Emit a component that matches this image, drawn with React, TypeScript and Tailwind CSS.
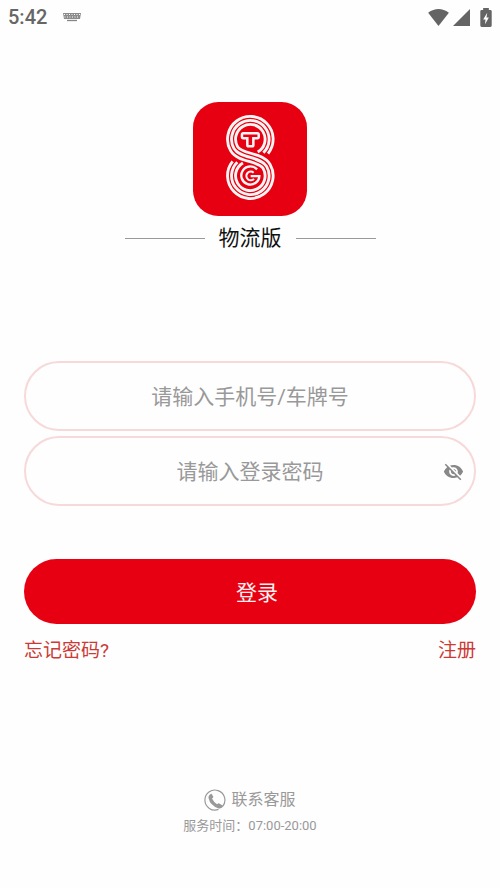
import { useState } from "react";
import { MdVisibility, MdVisibilityOff } from "react-icons/md";

// Radii of the ribbon's strands on the upper loop; each strand swaps sides on the lower loop.
const strands = [
  { top: 68, angle: 39 },
  { top: 56, angle: 46 },
  { top: 44, angle: 60 },
];

const centerX = 171;
const upperY = 111;
const lowerY = 220;
const radiusSum = 112;
const joinCos = Math.cos(Math.PI / 6);
const joinSin = 0.5;

function strandPath(top: number, angle: number, endAngle: number) {
  const bottom = radiusSum - top;
  const a = (angle * Math.PI) / 180;
  const b = (endAngle * Math.PI) / 180;
  const start = `${centerX + top * Math.cos(a)} ${upperY + top * Math.sin(a)}`;
  const leaveX = centerX - top * joinCos;
  const leaveY = upperY + top * joinSin;
  const enterX = centerX + bottom * joinCos;
  const enterY = lowerY - bottom * joinSin;
  const leavePull = top * 0.62;
  const enterPull = bottom * 0.62;
  const bend = `${leaveX + leavePull * joinSin} ${leaveY + leavePull * joinCos} ${enterX - enterPull * joinSin} ${enterY - enterPull * joinCos}`;
  const end = `${centerX - bottom * Math.cos(b)} ${lowerY - bottom * Math.sin(b)}`;
  return `M${start}A${top} ${top} 0 1 0 ${leaveX} ${leaveY}C${bend} ${enterX} ${enterY}A${bottom} ${bottom} 0 1 1 ${end}`;
}

function Logo() {
  return (
    <svg viewBox="0 0 340 340" className="size-[114px]" role="img" aria-label="STG">
      <rect width="340" height="340" rx="76" fill="#e60012" />
      <g fill="none" stroke="#fff5f5" strokeWidth="8.500">
        {strands.map((s, i) => (
          <path key={s.top} d={strandPath(s.top, s.angle, strands[2 - i].angle)} />
        ))}
        <path
          d="M150 93h42q4 0 4 4v7q0 4-4 4h-12v20q0 4-4 4h-10q-4 0-4-4v-20h-12q-4 0-4-4v-7q0-4 4-4z"
          strokeWidth="7.500"
        />
        <path d="M191 201A27 27 0 1 0 198 221H172" strokeWidth="7" />
        <path d="M181 211A13 13 0 1 0 182 229" strokeWidth="6" />
      </g>
    </svg>
  );
}

function KeyboardIcon() {
  return (
    <svg viewBox="0 0 18 10" className="h-[10px] w-[18px]" aria-hidden="true">
      <path d="M0 1h18l-1 6H1z" fill="#8b8b8b" />
      <path d="M1 2.5h16M1.5 5h15" stroke="#fff" strokeWidth="1" strokeDasharray="1 1.5" />
      <path d="M4 8.5h10" stroke="#858585" strokeWidth="1.3" />
    </svg>
  );
}

function StatusBar() {
  return (
    <header className="flex h-[34px] items-center justify-between pr-2 pl-2 text-[#666]">
      <div className="flex items-center gap-4">
        <span className="font-[Roboto,sans-serif] text-[20px] font-medium">5:42</span>
        <KeyboardIcon />
      </div>
      <div className="flex items-center gap-1">
        <svg viewBox="0 0 22 18" className="h-[17px] w-[21px]" aria-hidden="true">
          <path d="M0 4Q11-4 22 4L11 18z" fill="#646464" />
        </svg>
        <svg viewBox="0 0 18 18" className="size-[17px]" aria-hidden="true">
          <path d="M18 0v18H0z" fill="#646464" />
        </svg>
        <svg viewBox="0 0 12 20" className="ml-1.5 h-[19px] w-3" aria-hidden="true">
          <path d="M3 0h6v2h1.500q1.500 0 1.500 1.500v15q0 1.500-1.500 1.500h-9Q0 20 0 18.500v-15Q0 2 1.500 2H3z" fill="#646464" />
          <path d="M7.300 5L3 12h2.500L5 17l4-7H6.500z" fill="#fff" />
        </svg>
      </div>
    </header>
  );
}

function ServiceIcon() {
  return (
    <svg viewBox="0 0 22 22" className="size-[22px]" fill="none" aria-hidden="true">
      <path d="M18.800 17.200A10 10 0 1 0 14.500 20.400" stroke="#999" strokeWidth="1.200" />
      <path
        d="M5.200 6.200L6.600 5q.8-.5 1.400.4l1.200 2.200q.3.700-.3 1.200l-.9.800q1.700 3.600 5 5.600l1-.8q.6-.4 1.300 0l3.400 2q.9.600.2 1.400-1.700 2.200-4.200 1.600Q6.200 16.800 4.500 9q-.2-1.700.7-2.800z"
        fill="#999"
      />
    </svg>
  );
}

const fieldClass =
  "h-[70px] w-full rounded-full border-2 border-[#f7d9d9] bg-transparent px-14 pt-0.5 text-center text-[21px] text-[#333] outline-none placeholder:text-[#999] placeholder:opacity-100";

export default function App() {
  const [visible, setVisible] = useState(false);

  return (
    <div className="flex min-h-screen flex-col bg-[#fefefe] font-[Roboto,'Noto_Sans_CJK_SC',sans-serif]">
      <StatusBar />
      <main className="flex grow flex-col px-6 pt-[68px]">
        <div className="flex flex-col items-center">
          <Logo />
          <div className="mt-1 flex items-center gap-3.5">
            <span className="h-px w-20 bg-[#999]" />
            <h1 className="text-[21px] leading-9 text-[#111]">物流版</h1>
            <span className="h-px w-20 bg-[#999]" />
          </div>
        </div>

        <form className="mt-[105px]" onSubmit={(e) => e.preventDefault()}>
          <div className="flex flex-col gap-[5px]">
            <input type="text" aria-label="手机号/车牌号" placeholder="请输入手机号/车牌号" className={fieldClass} />
            <div className="relative">
              <input
                type={visible ? "text" : "password"}
                aria-label="登录密码"
                placeholder="请输入登录密码"
                className={fieldClass}
              />
              <button
                type="button"
                aria-label="显示密码"
                onClick={() => setVisible(!visible)}
                className="absolute inset-y-0 right-3 flex items-center text-[#888]"
              >
                {visible ? <MdVisibility size={21} /> : <MdVisibilityOff size={21} />}
              </button>
            </div>
          </div>
          <button
            type="submit"
            className="mt-[53px] block h-[65px] w-full rounded-full bg-[#e60012] pt-1 pl-3.5 text-[21px] text-[#fff0f0]"
          >
            登录
          </button>
          <div className="mt-3 flex justify-between text-[19px] leading-[30px] text-[#cb3a35]">
            <a href="#forgot">忘记密码?</a>
            <a href="#register">注册</a>
          </div>
        </form>

        <footer className="mt-auto flex flex-col items-center pb-[50px] text-[#999]">
          <a href="#service" className="flex items-center gap-[5px] text-base leading-7">
            <ServiceIcon />
            联系客服
          </a>
          <p className="text-[13px] leading-6">服务时间：07:00-20:00</p>
        </footer>
      </main>
    </div>
  );
}
